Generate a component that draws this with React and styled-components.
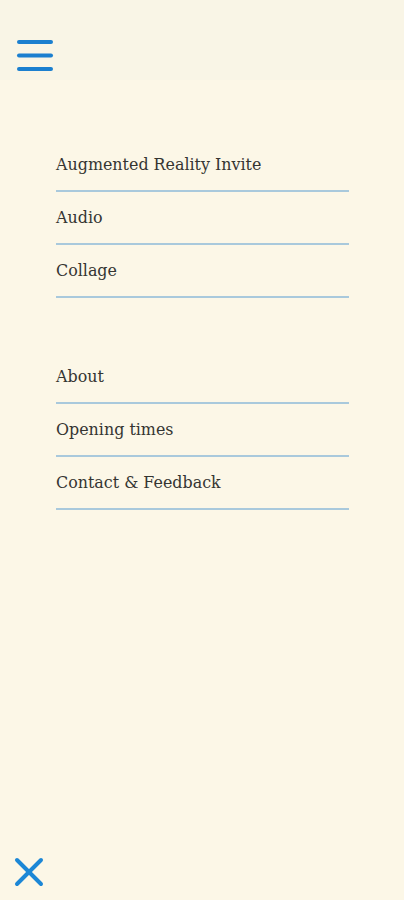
import React from "react";
import styled, { createGlobalStyle } from "styled-components";

const Global = createGlobalStyle`
  html, body { margin: 0; padding: 0; background: #fcf7e7; }
  body { font-family: "DejaVu Serif", serif; }
`;

const Page = styled.div`
  min-height: 100vh;
  display: flex;
  flex-direction: column;
  background: #fcf7e7;
`;

const Header = styled.header`
  height: 80px;
  background: #f9f5e6;
  display: flex;
  align-items: flex-start;
  padding: 38px 0 0 16px;
  box-sizing: border-box;
`;

const IconButton = styled.button`
  border: 0;
  background: transparent;
  padding: 0;
  display: flex;
  color: #1b7fcf;
  cursor: pointer;
`;

const Nav = styled.nav`
  display: flex;
  flex-direction: column;
  gap: 53px;
  padding: 59px 55px 0 56px;
`;

const Group = styled.ul`
  list-style: none;
  margin: 0;
  padding: 0;
`;

const Item = styled.li`
  height: 53px;
  box-sizing: border-box;
  border-bottom: 2px solid #a9c9dc;
  display: flex;
  align-items: center;
  font-size: 15.9px;
  color: #353532;
`;

const Footer = styled.footer`
  margin-top: auto;
  padding: 0 0 12px 13px;
`;

const groups = [
  ["Augmented Reality Invite", "Audio", "Collage"],
  ["About", "Opening times", "Contact & Feedback"],
];

export default function App() {
  return (
    <Page>
      <Global />
      <Header>
        <IconButton aria-label="Menu">
          <svg width="38" height="34" viewBox="0 0 38 34">
            <g stroke="currentColor" strokeWidth="4" strokeLinecap="round">
              <line x1="3" y1="4" x2="35" y2="4" />
              <line x1="3" y1="17.5" x2="35" y2="17.5" />
              <line x1="3" y1="31" x2="35" y2="31" />
            </g>
          </svg>
        </IconButton>
      </Header>
      <Nav>
        {groups.map((g, i) => (
          <Group key={i}>
            {g.map((t) => (
              <Item key={t}>{t}</Item>
            ))}
          </Group>
        ))}
      </Nav>
      <Footer>
        <IconButton aria-label="Close">
          <svg width="32" height="32" viewBox="0 0 32 32">
            <g stroke="#1c87d6" strokeWidth="4" strokeLinecap="round">
              <line x1="4" y1="4" x2="28" y2="28" />
              <line x1="28" y1="4" x2="4" y2="28" />
            </g>
          </svg>
        </IconButton>
      </Footer>
    </Page>
  );
}
